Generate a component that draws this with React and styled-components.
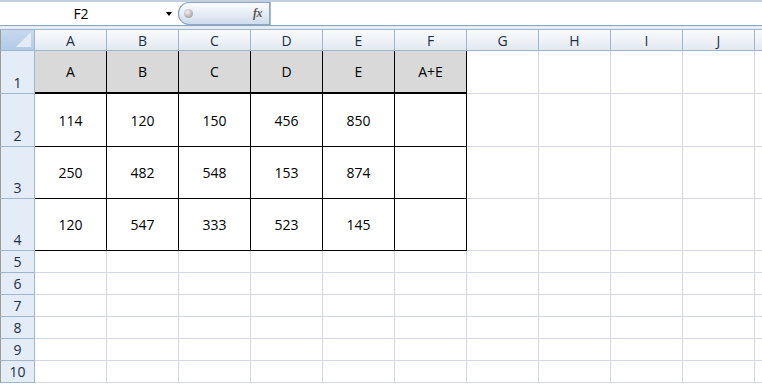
import React from "react";
import styled, { createGlobalStyle } from "styled-components";

const GlobalStyle = createGlobalStyle`
  html, body {
    margin: 0;
    padding: 0;
    background: #ffffff;
    overflow: hidden;
  }
  * {
    box-sizing: border-box;
  }
`;

// K is only a sliver at the right edge, its letter falls outside the window
const COLS = ["A", "B", "C", "D", "E", "F", "G", "H", "I", "J", ""];
const ROW_HEIGHTS = [43, 53, 52, 52, 22, 22, 22, 22, 22, 22];
const TABLE = [
  ["A", "B", "C", "D", "E", "A+E"],
  ["114", "120", "150", "456", "850", ""],
  ["250", "482", "548", "153", "874", ""],
  ["120", "547", "333", "523", "145", ""],
];

const Window = styled.div`
  width: 762px;
  height: 384px;
  overflow: hidden;
  font-family: "Open Sans", "Liberation Sans", Arial, sans-serif;
  display: flex;
  flex-direction: column;
`;

const FormulaBar = styled.div`
  flex-shrink: 0;
  display: flex;
  height: 26px;
  border-top: 2px solid #c2cfdf;
  border-bottom: 1px solid #8ea3bd;
  background: #ffffff;
`;

const NameBox = styled.div`
  width: 178px;
  display: flex;
  align-items: center;
  font-size: 14px;
  color: #000;
`;

const NameText = styled.span`
  flex: 1;
  text-align: center;
  padding-right: 4px;
`;

const DropArrow = styled.span`
  width: 0;
  height: 0;
  margin-right: 6px;
  border-left: 3.5px solid transparent;
  border-right: 3.5px solid transparent;
  border-top: 4px solid #000;
`;

const FxPill = styled.div`
  width: 92px;
  height: 23px;
  display: flex;
  align-items: center;
  justify-content: space-between;
  padding: 0 7px 0 5px;
  border: 1px solid #8ea6c6;
  border-left-color: #7f97b8;
  border-radius: 11px 0 0 11px;
  background: linear-gradient(#fbfcfe, #e6edf6 50%, #cfdcec);
`;

const Knob = styled.span`
  width: 9px;
  height: 9px;
  border-radius: 50%;
  background: radial-gradient(circle at 40% 35%, #f2f2f2, #a8a8a8 70%, #8c8c8c);
`;

const FxLabel = styled.span`
  font-family: "Liberation Serif", "Times New Roman", serif;
  font-style: italic;
  font-weight: bold;
  font-size: 12px;
  color: #5b5b5b;
  letter-spacing: -0.5px;
`;

const FormulaInput = styled.div`
  flex: 1;
  border-left: 1px solid #a9b8cc;
`;

const Spacer = styled.div`
  flex-shrink: 0;
  height: 3px;
  background: #e6ecf3;
`;

const Grid = styled.div`
  flex-shrink: 0;
  display: grid;
  grid-template-columns: 35px repeat(11, 72px);
  grid-template-rows: 22px ${ROW_HEIGHTS.map((h) => h + "px").join(" ")};
`;

const Corner = styled.div`
  position: relative;
  background: linear-gradient(#c5d8ee, #b3cbe7);
  border-left: 1px solid #9b9b9b;
  border-right: 1px solid #9eb6ce;
  border-bottom: 1px solid #9eb6ce;
  border-top: 1px solid #9eb6ce;
  overflow: hidden;
`;

const CornerTriangle = styled.span`
  position: absolute;
  right: 3px;
  bottom: 3px;
  width: 0;
  height: 0;
  border-left: 15px solid transparent;
  border-bottom: 15px solid #e2ebf6;
`;

const ColHead = styled.div`
  display: flex;
  align-items: center;
  justify-content: center;
  font-size: 14px;
  color: #1d2e45;
  background: linear-gradient(#f8fafc, #eef2f7 55%, #e1e8f1);
  border-top: 1px solid #9eb6ce;
  border-right: 1px solid #9eb6ce;
  border-bottom: 1px solid #9eb6ce;
`;

const RowHead = styled.div`
  display: flex;
  align-items: flex-end;
  justify-content: center;
  padding-bottom: 1px;
  font-size: 14px;
  color: #1d2e45;
  background: #e4ecf7;
  border-left: 1px solid #9b9b9b;
  border-right: 1px solid #9eb6ce;
  border-bottom: 1px solid #9eb6ce;
`;

const Cell = styled.div`
  display: flex;
  align-items: center;
  justify-content: center;
  font-size: 14px;
  color: #000;
  background: ${(p) => (p.$head ? "#d9d9d9" : "#ffffff")};
  border-right: 1px solid ${(p) => (p.$table ? "#000000" : "#d0d7e5")};
  border-bottom: ${(p) => (p.$head ? 2 : 1)}px solid
    ${(p) => (p.$table ? "#000000" : "#d0d7e5")};
`;

export default function App() {
  return (
    <Window>
      <GlobalStyle />
      <FormulaBar>
        <NameBox>
          <NameText>F2</NameText>
          <DropArrow />
        </NameBox>
        <FxPill>
          <Knob />
          <FxLabel>fx</FxLabel>
        </FxPill>
        <FormulaInput />
      </FormulaBar>
      <Spacer />
      <Grid>
        <Corner>
          <CornerTriangle />
        </Corner>
        {COLS.map((c, ci) => (
          <ColHead key={ci}>{c}</ColHead>
        ))}
        {ROW_HEIGHTS.map((_, r) => (
          <React.Fragment key={r}>
            <RowHead>{r + 1}</RowHead>
            {COLS.map((c, ci) => {
              const inTable = r < TABLE.length && ci < 6;
              return (
                <Cell key={ci} $table={inTable} $head={inTable && r === 0}>
                  {inTable ? TABLE[r][ci] : ""}
                </Cell>
              );
            })}
          </React.Fragment>
        ))}
      </Grid>
    </Window>
  );
}
